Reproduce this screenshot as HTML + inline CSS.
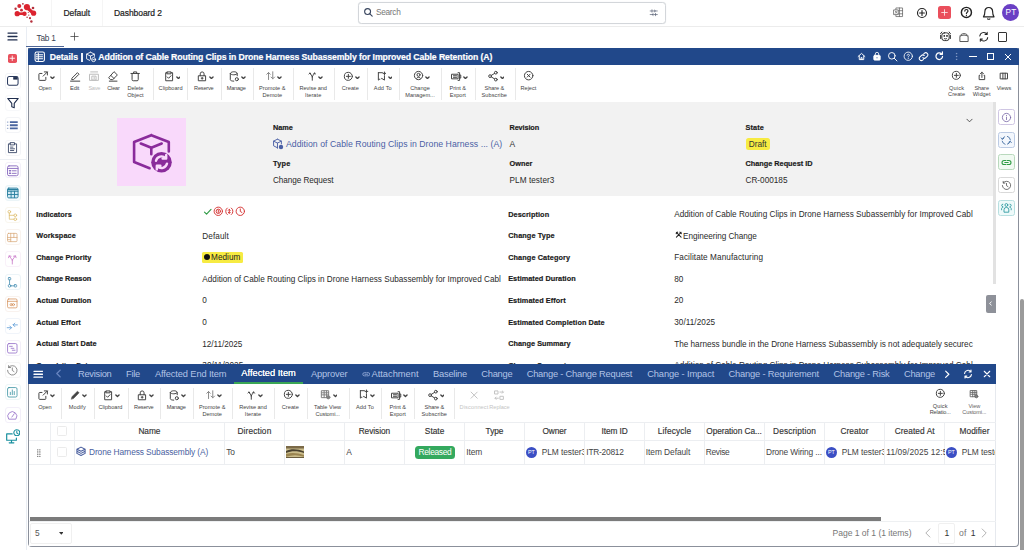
<!DOCTYPE html>
<html><head><meta charset="utf-8"><title>Details</title>
<style>
html,body{margin:0;padding:0;}
body{width:1024px;height:550px;overflow:hidden;background:#fff;position:relative;font-family:"Liberation Sans",sans-serif;}
.b{position:absolute;box-sizing:border-box;display:block;}
.t{position:absolute;white-space:nowrap;display:block;}
</style></head><body>
<div class="b" style="left:0px;top:26px;width:1024px;height:1px;background:#ececec;"></div>
<div class="b" style="left:51px;top:0px;width:1px;height:26px;background:#f5f5f5;"></div>
<div class="b" style="left:102px;top:0px;width:1px;height:26px;background:#f5f5f5;"></div>
<svg class="b" style="left:0px;top:0px" width="48" height="26" viewBox="0 0 48 26" stroke="none"><circle cx="26.9" cy="7.1" r="3.1" fill="#dc2430"/><circle cx="33.6" cy="13.2" r="2.6" fill="#dc2430"/><circle cx="19.3" cy="6.1" r="2.0" fill="#d62a36"/><circle cx="22.9" cy="3.8" r="0.9" fill="#b03540"/><circle cx="15.6" cy="8.7" r="1.2" fill="#b5303c"/><circle cx="21.5" cy="10.2" r="1.4" fill="#c92c38"/><circle cx="33" cy="8" r="1.3" fill="#b5303c"/><circle cx="17.2" cy="13.7" r="2.6" fill="#dc2430"/><circle cx="24.5" cy="13.7" r="2.2" fill="#dc2430"/><circle cx="28.3" cy="12.5" r="0.6" fill="#a83540"/><circle cx="28.8" cy="15.1" r="0.7" fill="#b03540"/><circle cx="27.1" cy="17.3" r="0.8" fill="#b03540"/><circle cx="30" cy="18.2" r="1.1" fill="#b5303c"/><circle cx="31.4" cy="21.5" r="1.2" fill="#b5303c"/><path d="M17.2 13.700L24.500 13.700" stroke="#dc2430" stroke-width="2.600"/><path d="M27.500 8L33 13" stroke="#dc2430" stroke-width="3.200" stroke-linecap="round"/></svg>
<span class="t" style="left:63.45px;top:7px;font-size:8.5px;line-height:12px;color:#222;letter-spacing:-0.062px;-webkit-text-stroke:.2px #222;">Default</span>
<span class="t" style="left:114.00px;top:7px;font-size:8.5px;line-height:12px;color:#222;letter-spacing:-0.061px;-webkit-text-stroke:.2px #222;">Dashboard 2</span>
<div class="b" style="left:358px;top:1.5px;width:308px;height:22px;border:1px solid #d3d6da;border-radius:3.500px;background:#fff;box-shadow:0 0 1px #dfe2e6;"></div>
<svg class="b" style="left:363.05px;top:7.05px;" width="10.5" height="10.5" viewBox="0 0 16 16" fill="none" stroke="#39465f" stroke-width="1.7" stroke-linecap="round" stroke-linejoin="round"><circle cx="7" cy="7" r="4.500"/><path d="M10.500 10.500l3.500 3.500"/></svg>
<span class="t" style="left:376.00px;top:6px;font-size:8.3px;line-height:12px;color:#777;letter-spacing:-0.300px;">Search</span>
<svg class="b" style="left:648.75px;top:7.55px;" width="9.5" height="9.5" viewBox="0 0 16 16" fill="none" stroke="#5a6478" stroke-width="1.2" stroke-linecap="round" stroke-linejoin="round"><path d="M2 5h12M2 11h12M5 3v4M11 9v4M9 3.500l2 1.500-2 1.500M7 9.500l-2 1.500 2 1.500" /></svg>
<svg class="b" style="left:892.05px;top:6.35px;" width="12.5" height="12.5" viewBox="0 0 16 16" fill="none" stroke="#666" stroke-width="1.0" stroke-linecap="round" stroke-linejoin="round"><path d="M5.500 2.500h8v11h-8zM9.500 2.500v11M5.500 6h8M5.500 10h8"/><rect x="2.500" y="5" width="5.500" height="6" fill="#fff"/><path d="M4.200 6.700l2.200 2.600M6.400 6.700l-2.200 2.600" stroke-width=".9"/></svg>
<svg class="b" style="left:915.50px;top:6.50px;" width="12" height="12" viewBox="0 0 16 16" fill="none" stroke="#222" stroke-width="1.5" stroke-linecap="round" stroke-linejoin="round"><circle cx="8" cy="8" r="6"/><path d="M8 4.800v6.400M4.800 8h6.400"/></svg>
<div class="b" style="left:937.8px;top:6px;width:13px;height:13px;background:#ea4f5c;border-radius:2.500px;"></div>
<svg class="b" style="left:939.90px;top:8.00px;" width="9" height="9" viewBox="0 0 16 16" fill="none" stroke="#fdeaec" stroke-width="1.5" stroke-linecap="round" stroke-linejoin="round"><path d="M8 3v10M3 8h10"/></svg>
<svg class="b" style="left:960.00px;top:6.10px;" width="12.8" height="12.8" viewBox="0 0 16 16" fill="none" stroke="#222" stroke-width="1.5" stroke-linecap="round" stroke-linejoin="round"><circle cx="8" cy="8" r="6.300" stroke-width="1.800"/><path d="M6 6.300c0-2.600 4-2.600 4 0 0 1.500-2 1.500-2 3.200M8 11.800v.2"/></svg>
<svg class="b" style="left:980.85px;top:4.85px;" width="15.5" height="15.5" viewBox="0 0 16 16" fill="none" stroke="#222" stroke-width="1.2" stroke-linecap="round" stroke-linejoin="round"><path d="M2.500 12.200h11c-1.300-1.300-1.500-2.200-1.500-5.400 0-5.600-8-5.600-8 0 0 3.200-.2 4.100-1.500 5.400zM6.800 14.300c.6.600 1.800.600 2.400 0"/></svg>
<div class="b" style="left:1002.3px;top:3.8px;width:17.1px;height:17.1px;background:#6a3fc4;border-radius:50%;"></div>
<span class="t" style="left:1005.60px;top:7px;font-size:8.2px;line-height:11px;color:#fff;letter-spacing:0.161px;">PT</span>
<div class="b" style="left:26px;top:27px;width:1px;height:523px;background:#e9edf3;"></div>
<span class="t" style="left:36.50px;top:32px;font-size:8.3px;line-height:12px;color:#3a4253;letter-spacing:-0.261px;">Tab 1</span>
<div class="b" style="left:26px;top:45.9px;width:38px;height:1.6px;background:#4f6697;"></div>
<svg class="b" style="left:69.80px;top:31.80px;" width="9" height="9" viewBox="0 0 16 16" fill="none" stroke="#3a3a3a" stroke-width="1.3" stroke-linecap="round" stroke-linejoin="round"><path d="M8 1.500v13M1.500 8h13"/></svg>
<svg class="b" style="left:7.10px;top:31.30px;" width="11" height="11" viewBox="0 0 16 16" fill="none" stroke="#1f2d4d" stroke-width="1.9" stroke-linecap="round" stroke-linejoin="round"><path d="M1.500 3h13M1.500 8h13M1.500 13h13"/></svg>
<div class="b" style="left:8px;top:53.7px;width:9.3px;height:9.6px;background:#e8505c;border-radius:1.800px;"></div>
<svg class="b" style="left:9.35px;top:55.25px;" width="6.5" height="6.5" viewBox="0 0 16 16" fill="none" stroke="#fff" stroke-width="2.2" stroke-linecap="round" stroke-linejoin="round"><path d="M8 2.500v11M2.500 8h11"/></svg>
<div class="b" style="left:4.5px;top:72.5px;width:16px;height:16px;border:1px solid #f3f4f7;border-radius:3px;background:#fff;"></div>
<svg class="b" style="left:5.80px;top:73.60px;" width="13.6" height="13.6" viewBox="0 0 16 16" fill="none" stroke="#2a3a5e" stroke-width="1.2" stroke-linecap="round" stroke-linejoin="round"><rect x="1.800" y="3" width="12.400" height="10.200" rx="2"/><path d="M8.500 3.600h5.200v3h-5.200z" fill="#1f2d4d" stroke="none"/></svg>
<div class="b" style="left:4.5px;top:94.8px;width:16px;height:16px;border:1px solid #f7f8fa;border-radius:3px;background:#fff;"></div>
<svg class="b" style="left:5.60px;top:95.90px;" width="14" height="14" viewBox="0 0 16 16" fill="none" stroke="#1f2d4d" stroke-width="1.25" stroke-linecap="round" stroke-linejoin="round"><path d="M2 2.800h12l-4.600 5.600v5l-2.800-1v-4z"/></svg>
<div class="b" style="left:4.5px;top:117px;width:16px;height:16px;border:1px solid #f3f4f7;border-radius:3px;background:#fff;"></div>
<svg class="b" style="left:6.35px;top:118.75px;" width="12.5" height="12.5" viewBox="0 0 16 16" fill="none" stroke="#4b66a0" stroke-width="2" stroke-linecap="round" stroke-linejoin="round"><path d="M5 4h10M5 8h10M5 12h10" stroke-width="2.500" stroke-linecap="butt"/><path d="M1.200 4h1.800M1.200 8h1.800M1.200 12h1.800" stroke="#9fb0d0" stroke-width="1.600" stroke-linecap="butt"/></svg>
<div class="b" style="left:4.5px;top:139.5px;width:16px;height:16px;border:1px solid #f3f4f7;border-radius:3px;background:#fff;"></div>
<svg class="b" style="left:6.10px;top:140.80px;" width="13" height="13" viewBox="0 0 16 16" fill="none" stroke="#3a4868" stroke-width="1.1" stroke-linecap="round" stroke-linejoin="round"><path d="M5.500 3.500h-2.500v10.800h10v-10.800h-2.500M5.500 2h5v2.800h-5zM5.500 7.500h3M5.500 9.600h5M5.500 11.700h4"/></svg>
<div class="b" style="left:0px;top:158.5px;width:26px;height:1px;background:#edf0f4;"></div>
<div class="b" style="left:4.5px;top:162.3px;width:16px;height:16px;border:1px solid #f3f0f9;border-radius:3px;background:#fff;"></div>
<svg class="b" style="left:5.80px;top:163.60px;" width="13.6" height="13.6" viewBox="0 0 16 16" fill="none" stroke="#8a6cc0" stroke-width="1.1" stroke-linecap="round" stroke-linejoin="round"><rect x="1.800" y="2.200" width="12.400" height="11.600" rx="1.800"/><path d="M2 5.200h12M7.500 8h4.500M7.500 11h4.500"/><path d="M4.200 8h1.200M4.200 11h1.200" stroke-width="1.800"/></svg>
<div class="b" style="left:4.5px;top:184.8px;width:16px;height:16px;border:1px solid #ebf4f7;border-radius:3px;background:#f6fbfd;"></div>
<svg class="b" style="left:5.80px;top:186.20px;" width="13.6" height="13.6" viewBox="0 0 16 16" fill="none" stroke="#2a7f9f" stroke-width="1.1" stroke-linecap="round" stroke-linejoin="round"><rect x="1.800" y="2.500" width="12.400" height="11.500" rx="1.500" fill="#d3ebf5"/><path d="M2 6.200h12M2 10h12M6 6.200v7.500M10 6.200v7.500"/><path d="M2.300 4.200h11.400" stroke-width="1.600"/></svg>
<div class="b" style="left:4.5px;top:207.3px;width:16px;height:16px;border:1px solid #f9f6ee;border-radius:3px;background:#fff;"></div>
<svg class="b" style="left:6.30px;top:209.00px;" width="12.6" height="12.6" viewBox="0 0 16 16" fill="none" stroke="#dcbb68" stroke-width="0.95" stroke-linecap="round" stroke-linejoin="round"><circle cx="4.200" cy="3.500" r="1.700"/><circle cx="11.800" cy="8" r="1.700"/><circle cx="11.800" cy="13" r="1.700"/><path d="M4.200 5.200v7.800h5.800M4.200 8h5.800"/></svg>
<div class="b" style="left:4.5px;top:229.4px;width:16px;height:16px;border:1px solid #f9f3ee;border-radius:3px;background:#fff;"></div>
<svg class="b" style="left:6.30px;top:231.10px;" width="12.6" height="12.6" viewBox="0 0 16 16" fill="none" stroke="#d9aa7c" stroke-width="0.95" stroke-linecap="round" stroke-linejoin="round"><rect x="2" y="3" width="12" height="10.500" rx="1.200"/><path d="M6 3v10.500M10 3v5.200M2 8.200h12M6 11h-4"/></svg>
<div class="b" style="left:4.5px;top:251.39999999999998px;width:16px;height:16px;border:1px solid #f9f1f9;border-radius:3px;background:#fff;"></div>
<svg class="b" style="left:6.30px;top:253.30px;" width="12.6" height="12.6" viewBox="0 0 16 16" fill="none" stroke="#c46cc4" stroke-width="0.95" stroke-linecap="round" stroke-linejoin="round"><path d="M8 14v-5M8 9l-3.800-5.200M8 9l3.800-5.200M3.200 6l.8-2.500 2.400.6M12.800 6l-.8-2.500-2.400.6"/></svg>
<div class="b" style="left:4.5px;top:274px;width:16px;height:16px;border:1px solid #ecf4f8;border-radius:3px;background:#fff;"></div>
<svg class="b" style="left:6.30px;top:275.70px;" width="12.6" height="12.6" viewBox="0 0 16 16" fill="none" stroke="#3f8ab0" stroke-width="0.95" stroke-linecap="round" stroke-linejoin="round"><rect x="3" y="2" width="3" height="3" rx=".800"/><circle cx="4.500" cy="12.500" r="1.700"/><rect x="10.500" y="11" width="3" height="3" rx=".800"/><path d="M4.500 5v5.800M6.200 12.500h4.300"/></svg>
<div class="b" style="left:4.5px;top:295.5px;width:16px;height:16px;border:1px solid #f9f2ee;border-radius:3px;background:#fff;"></div>
<svg class="b" style="left:6.30px;top:297.30px;" width="12.6" height="12.6" viewBox="0 0 16 16" fill="none" stroke="#d48f58" stroke-width="0.95" stroke-linecap="round" stroke-linejoin="round"><rect x="2" y="2.500" width="12" height="11.300" rx="1.500"/><path d="M2 5.500h12"/><circle cx="6.600" cy="9.700" r="1.400"/><circle cx="9.400" cy="9.700" r="1.400"/></svg>
<div class="b" style="left:4.5px;top:318px;width:16px;height:16px;border:1px solid #f0f4fa;border-radius:3px;background:#fff;"></div>
<svg class="b" style="left:6.30px;top:319.70px;" width="12.6" height="12.6" viewBox="0 0 16 16" fill="none" stroke="#4f93d4" stroke-width="0.95" stroke-linecap="round" stroke-linejoin="round"><path d="M1.500 9.800h5.500l-2.200-2.200M7 9.800l-2.200 2.200M14.500 6.200h-5.500l2.200-2.200M9 6.200l2.200 2.200"/></svg>
<div class="b" style="left:4.5px;top:340px;width:16px;height:16px;border:1px solid #f3eff9;border-radius:3px;background:#fff;"></div>
<svg class="b" style="left:6.30px;top:341.70px;" width="12.6" height="12.6" viewBox="0 0 16 16" fill="none" stroke="#9068c6" stroke-width="1.0" stroke-linecap="round" stroke-linejoin="round"><rect x="2" y="2" width="12" height="12" rx="1.800"/><path d="M4.500 5.500h3.500M6.500 8h3.500M8 10.500h3.500"/></svg>
<div class="b" style="left:4.5px;top:362.4px;width:16px;height:16px;border:1px solid #f5f5f5;border-radius:3px;background:#fff;"></div>
<svg class="b" style="left:6.30px;top:364.10px;" width="12.6" height="12.6" viewBox="0 0 16 16" fill="none" stroke="#6a6a6a" stroke-width="0.95" stroke-linecap="round" stroke-linejoin="round"><path d="M3.300 4.300a6 6 0 1 1-1.300 3.700M3.300 2v2.500h2.500M8 5v3.200l2.200 1.500"/></svg>
<div class="b" style="left:4.5px;top:384.4px;width:16px;height:16px;border:1px solid #ecf6f7;border-radius:3px;background:#fff;"></div>
<svg class="b" style="left:6.30px;top:386.10px;" width="12.6" height="12.6" viewBox="0 0 16 16" fill="none" stroke="#3590a0" stroke-width="1.0" stroke-linecap="round" stroke-linejoin="round"><rect x="2" y="2" width="12" height="12" rx="1.800"/><path d="M5.500 11v-3M8 11v-6M10.500 11v-4"/></svg>
<div class="b" style="left:4.5px;top:406.8px;width:16px;height:16px;border:1px solid #f3eff9;border-radius:3px;background:#fff;"></div>
<svg class="b" style="left:6.30px;top:408.50px;" width="12.6" height="12.6" viewBox="0 0 16 16" fill="none" stroke="#9068c6" stroke-width="1.0" stroke-linecap="round" stroke-linejoin="round"><path d="M3.200 12.500a5.800 5.800 0 1 1 9.600 0zM7.500 10.200l3-4.200"/></svg>
<svg class="b" style="left:5.05px;top:431.05px;" width="13.5" height="13.5" viewBox="0 0 16 16" fill="none" stroke="#19909f" stroke-width="1.4" stroke-linecap="round" stroke-linejoin="round"><path d="M8.500 3.500h-6.500v7.500h11.500v-2.500M5 14h5.500M7.700 11v3"/></svg>
<svg class="b" style="left:12.60px;top:428.50px;" width="7.6" height="7.6" viewBox="0 0 16 16" fill="none" stroke="#19909f" stroke-width="2.2" stroke-linecap="round" stroke-linejoin="round"><circle cx="8" cy="8" r="6.300" fill="#fff"/><path d="M8 4.500v3.800l2.500 1.500"/></svg>
<svg class="b" style="left:938.80px;top:30.30px;" width="13" height="13" viewBox="0 0 16 16" fill="none" stroke="#222" stroke-width="1.15" stroke-linecap="round" stroke-linejoin="round"><rect x="3.500" y="3.500" width="9" height="9.500" rx="3"/><path d="M2 6.500v4M14 6.500v4M2 4.500l1.500-2M14 4.500l-1.500-2M6.500 10.500c.8.800 2.200.800 3 0"/><circle cx="6.300" cy="7.300" r=".5" fill="#222"/><circle cx="9.700" cy="7.300" r=".5" fill="#222"/></svg>
<svg class="b" style="left:958.40px;top:31.30px;" width="12" height="12" viewBox="0 0 16 16" fill="none" stroke="#555" stroke-width="1.3" stroke-linecap="round" stroke-linejoin="round"><path d="M2.500 13.500v-5.500c0-6 11-6 11 0v5.500zM3.500 6.500c2-1.500 7-1.500 9 0"/></svg>
<svg class="b" style="left:977.85px;top:31.05px;" width="11.5" height="11.5" viewBox="0 0 16 16" fill="none" stroke="#222" stroke-width="1.4" stroke-linecap="round" stroke-linejoin="round"><path d="M2.500 7a5.500 5.500 0 0 1 10-2.500M13.500 9a5.500 5.500 0 0 1-10 2.500M12.800 1.800v3h-3M3.200 14.200v-3h3"/></svg>
<div class="b" style="left:997.9px;top:32.4px;width:9.4px;height:9.2px;border:1.100px solid #333;border-radius:1px;"></div>
<div class="b" style="left:28px;top:48px;width:991px;height:499px;border:1px solid #8b909b;border-top:none;border-radius:0 0 4px 4px;background:#fff;"></div>
<div class="b" style="left:28px;top:48px;width:991px;height:17px;background:#21488a;border-radius:2px 2px 0 0;"></div>
<div class="b" style="left:1020px;top:298.5px;width:3.6px;height:252px;background:#9b9b9b;border-radius:2px 2px 0 0;"></div>
<svg class="b" style="left:33.75px;top:51.05px;" width="11.5" height="11.5" viewBox="0 0 16 16" fill="none" stroke="#fff" stroke-width="1.5" stroke-linecap="round" stroke-linejoin="round"><rect x="1.500" y="1.500" width="13" height="13" rx="2.200"/><path d="M7 5.200h5M7 8h5M7 10.800h5M6 3v10"/><path d="M3.800 5.200h.6M3.800 8h.6M3.800 10.800h.6" stroke-width="1.800"/></svg>
<span class="t" style="left:49.70px;top:51px;font-size:8.7px;line-height:12px;color:#fff;font-weight:700;letter-spacing:-0.033px;-webkit-text-stroke:.2px #fff;">Details</span>
<div class="b" style="left:81.3px;top:52.7px;width:1.3px;height:9.8px;background:#eef2fa;"></div>
<svg class="b" style="left:84.55px;top:51.35px;" width="12.5" height="12.5" viewBox="0 0 16 16" fill="none" stroke="#fff" stroke-width="1.1" stroke-linecap="round" stroke-linejoin="round"><path d="M7 1.500l5 2.500v3M7 1.500l-5 2.500v6l4 2M2 4l5 2.500 5-2.500M7 6.500v4"/><circle cx="11" cy="11" r="2.600" fill="none"/><path d="M10 11h2"/></svg>
<span class="t" style="left:98.30px;top:51px;font-size:8.7px;line-height:12px;color:#fff;font-weight:700;letter-spacing:-0.087px;-webkit-text-stroke:.2px #fff;">Addition of Cable Routing Clips in Drone Harness Subassembly for Improved Cable Retention (A)</span>
<svg class="b" style="left:856.50px;top:51.80px;" width="9" height="9" viewBox="0 0 16 16" fill="none" stroke="#fff" stroke-width="1.7" stroke-linecap="round" stroke-linejoin="round"><path d="M2 8l6-5.500 6 5.500M4 7v6.500h8v-6.500M7 13.500v-3.500h2v3.500" /></svg>
<svg class="b" style="left:871.80px;top:51.00px;" width="10" height="10" viewBox="0 0 16 16" fill="none" stroke="#fff" stroke-width="1.6" stroke-linecap="round" stroke-linejoin="round"><rect x="3" y="7" width="10" height="7.500" rx="1" fill="#fff"/><path d="M5.300 7v-2.200a2.700 2.700 0 0 1 5.400 0v2.200" stroke-width="1.300"/><circle cx="8" cy="10.700" r=".9" fill="#21488a" stroke="none"/></svg>
<svg class="b" style="left:886.80px;top:51.00px;" width="11" height="11" viewBox="0 0 16 16" fill="none" stroke="#fff" stroke-width="1.35" stroke-linecap="round" stroke-linejoin="round"><circle cx="7" cy="7" r="4.800"/><path d="M10.500 10.500l4 4"/></svg>
<svg class="b" style="left:902.75px;top:50.55px;" width="10.5" height="10.5" viewBox="0 0 16 16" fill="none" stroke="#fff" stroke-width="1.3" stroke-linecap="round" stroke-linejoin="round"><circle cx="8" cy="8" r="6.300"/><path d="M6.300 6.500c0-2.200 3.400-2.200 3.400 0 0 1.200-1.700 1.300-1.700 2.700M8 11.300v.2"/></svg>
<svg class="b" style="left:918.40px;top:50.90px;" width="11.2" height="11.2" viewBox="0 0 16 16" fill="none" stroke="#fff" stroke-width="1.5" stroke-linecap="round" stroke-linejoin="round"><path d="M7 9.500a3 3 0 0 0 4.200 0l2.300-2.300a3 3 0 0 0-4.200-4.200l-1 1M9 6.500a3 3 0 0 0-4.200 0l-2.300 2.300a3 3 0 0 0 4.200 4.200l1-1"/></svg>
<svg class="b" style="left:933.55px;top:51.15px;" width="10.5" height="10.5" viewBox="0 0 16 16" fill="none" stroke="#fff" stroke-width="1.9" stroke-linecap="round" stroke-linejoin="round"><path d="M13 8a5 5 0 1 1-1.500-3.600M12.800 1.500v3.500h-3.500"/></svg>
<svg class="b" style="left:951.50px;top:51.80px;" width="9" height="9" viewBox="0 0 16 16" fill="none" stroke="#a9bbde" stroke-width="0.6" stroke-linecap="round" stroke-linejoin="round"><circle cx="8" cy="3" r=".7" fill="#a9bbde"/><circle cx="8" cy="8" r=".7" fill="#a9bbde"/><circle cx="8" cy="13" r=".7" fill="#a9bbde"/></svg>
<div class="b" style="left:969.3px;top:55.7px;width:8.2px;height:1.2px;background:#fff;"></div>
<div class="b" style="left:986.7px;top:52.5px;width:7.6px;height:7.4px;border:1.300px solid #fff;"></div>
<svg class="b" style="left:1004.30px;top:52.50px;" width="8" height="8" viewBox="0 0 16 16" fill="none" stroke="#fff" stroke-width="2" stroke-linecap="round" stroke-linejoin="round"><path d="M2.500 2.500l11 11M13.500 2.500l-11 11"/></svg>
<svg class="b" style="left:37.15px;top:69.85px;" width="12.3" height="12.3" viewBox="0 0 16 16" fill="none" stroke="#444" stroke-width="1.3" stroke-linecap="round" stroke-linejoin="round"><path d="M9.5 2.5h4v4M13.5 2.5L8 8M11.5 9.5v3a1 1 0 0 1-1 1h-7a1 1 0 0 1-1-1v-7a1 1 0 0 1 1-1h3"/></svg>
<svg class="b" style="left:49.85px;top:75.55px" width="4.9" height="3.50" viewBox="0 0 7 5" fill="none" stroke="#444" stroke-width="1.9" stroke-linecap="round" stroke-linejoin="round"><path d="M1.200 1.400l2.300 2.300 2.300-2.300"/></svg>
<span class="t" style="left:38.40px;top:84px;font-size:5.6px;line-height:8px;color:#444;letter-spacing:-0.125px;">Open</span>
<div class="b" style="left:60px;top:67.5px;width:1px;height:32.5px;background:#e9e9e9;"></div>
<svg class="b" style="left:68.55px;top:69.85px;" width="12.3" height="12.3" viewBox="0 0 16 16" fill="none" stroke="#444" stroke-width="1.3" stroke-linecap="round" stroke-linejoin="round"><path d="M4 10.5l7-7 2 2-7 7H4zM2 14.5h12"/></svg>
<span class="t" style="left:70.05px;top:84px;font-size:5.6px;line-height:8px;color:#444;letter-spacing:-0.087px;">Edit</span>
<svg class="b" style="left:88.05px;top:69.85px;" width="12.3" height="12.3" viewBox="0 0 16 16" fill="none" stroke="#bdbdbd" stroke-width="1.3" stroke-linecap="round" stroke-linejoin="round"><path d="M2.5 5.5h11v8h-11zM3.500 2.500h9M5.500 8h5v5h-5zM8 9.500v2"/></svg>
<span class="t" style="left:88.40px;top:84px;font-size:5.6px;line-height:8px;color:#bdbdbd;letter-spacing:-0.291px;">Save</span>
<svg class="b" style="left:107.35px;top:69.85px;" width="12.3" height="12.3" viewBox="0 0 16 16" fill="none" stroke="#444" stroke-width="1.3" stroke-linecap="round" stroke-linejoin="round"><path d="M9.500 2.500l4 4-6 6h-3l-2-2zM5 7l4 4M3 14.500h10"/></svg>
<span class="t" style="left:107.20px;top:84px;font-size:5.6px;line-height:8px;color:#444;letter-spacing:-0.157px;">Clear</span>
<svg class="b" style="left:129.25px;top:69.85px;" width="12.3" height="12.3" viewBox="0 0 16 16" fill="none" stroke="#444" stroke-width="1.3" stroke-linecap="round" stroke-linejoin="round"><path d="M2.500 4.500h11M6 4.500v-2h4v2M4 4.500v8a1.500 1.500 0 0 0 1.500 1.500h5a1.500 1.500 0 0 0 1.500-1.500v-8"/></svg>
<span class="t" style="left:127.40px;top:84px;font-size:5.6px;line-height:8px;color:#444;letter-spacing:-0.031px;">Delete</span>
<span class="t" style="left:127.20px;top:91px;font-size:5.6px;line-height:8px;color:#444;letter-spacing:0.036px;">Object</span>
<div class="b" style="left:153px;top:67.5px;width:1px;height:32.5px;background:#e9e9e9;"></div>
<svg class="b" style="left:162.65px;top:69.85px;" width="12.3" height="12.3" viewBox="0 0 16 16" fill="none" stroke="#444" stroke-width="1.3" stroke-linecap="round" stroke-linejoin="round"><path d="M5.500 3.500h-2v10.500h9v-10.500h-2M5.500 2.500h5v2.500h-5zM5.500 9l1.800 1.800 3.200-3.400"/></svg>
<svg class="b" style="left:175.55px;top:75.55px" width="4.9" height="3.50" viewBox="0 0 7 5" fill="none" stroke="#444" stroke-width="1.9" stroke-linecap="round" stroke-linejoin="round"><path d="M1.200 1.400l2.300 2.300 2.300-2.300"/></svg>
<span class="t" style="left:158.60px;top:84px;font-size:5.6px;line-height:8px;color:#444;letter-spacing:0.003px;">Clipboard</span>
<div class="b" style="left:187px;top:67.5px;width:1px;height:32.5px;background:#e9e9e9;"></div>
<svg class="b" style="left:196.15px;top:69.85px;" width="12.3" height="12.3" viewBox="0 0 16 16" fill="none" stroke="#444" stroke-width="1.3" stroke-linecap="round" stroke-linejoin="round"><path d="M3.500 7.500h9v6.500h-9zM5.500 7.500v-2.500a2.500 2.500 0 0 1 5 0v2.500M8 9.500v2.500M6.800 10.700h2.400"/></svg>
<svg class="b" style="left:208.85px;top:75.55px" width="4.9" height="3.50" viewBox="0 0 7 5" fill="none" stroke="#444" stroke-width="1.9" stroke-linecap="round" stroke-linejoin="round"><path d="M1.200 1.400l2.300 2.300 2.300-2.300"/></svg>
<span class="t" style="left:194.05px;top:84px;font-size:5.6px;line-height:8px;color:#444;letter-spacing:-0.193px;">Reserve</span>
<div class="b" style="left:220.5px;top:67.5px;width:1px;height:32.5px;background:#e9e9e9;"></div>
<svg class="b" style="left:228.35px;top:69.85px;" width="12.3" height="12.3" viewBox="0 0 16 16" fill="none" stroke="#444" stroke-width="1.3" stroke-linecap="round" stroke-linejoin="round"><path d="M3 4.500c0-3 9-3 9 0v3M3 4.500v8c0 1.500 2.500 2 4.500 2M3 4.500c0 2.500 9 2.500 9 0"/><circle cx="11.500" cy="12" r="2"/></svg>
<svg class="b" style="left:241.05px;top:75.55px" width="4.9" height="3.50" viewBox="0 0 7 5" fill="none" stroke="#444" stroke-width="1.9" stroke-linecap="round" stroke-linejoin="round"><path d="M1.200 1.400l2.300 2.300 2.300-2.300"/></svg>
<span class="t" style="left:226.70px;top:84px;font-size:5.6px;line-height:8px;color:#444;letter-spacing:-0.206px;">Manage</span>
<div class="b" style="left:253px;top:67.5px;width:1px;height:32.5px;background:#e9e9e9;"></div>
<svg class="b" style="left:264.54px;top:70.34px;" width="11.316" height="11.316" viewBox="0 0 16 16" fill="none" stroke="#8a8a8a" stroke-width="1.4130434782608696" stroke-linecap="round" stroke-linejoin="round"><path d="M5 13.500v-10M2.500 6l2.500-2.500 2.500 2.500M11 2.500v10M8.500 10l2.500 2.500 2.500-2.500"/></svg>
<svg class="b" style="left:277.15px;top:75.55px" width="4.9" height="3.50" viewBox="0 0 7 5" fill="none" stroke="#444" stroke-width="1.9" stroke-linecap="round" stroke-linejoin="round"><path d="M1.200 1.400l2.300 2.300 2.300-2.300"/></svg>
<span class="t" style="left:259.05px;top:84px;font-size:5.6px;line-height:8px;color:#444;letter-spacing:0.005px;">Promote &amp;</span>
<span class="t" style="left:262.55px;top:91px;font-size:5.6px;line-height:8px;color:#444;letter-spacing:-0.018px;">Demote</span>
<div class="b" style="left:292.5px;top:67.5px;width:1px;height:32.5px;background:#e9e9e9;"></div>
<svg class="b" style="left:306.51px;top:70.71px;" width="10.578000000000001" height="10.578000000000001" viewBox="0 0 16 16" fill="none" stroke="#444" stroke-width="1.5116279069767442" stroke-linecap="round" stroke-linejoin="round"><path d="M8 14v-5M8 9c0-3-3.500-3-3.500-6M8 9c0-3 3.500-3 3.500-6M3 4.500l1.500-1.500 1.500 1.500M10 4.500l1.500-1.500 1.500 1.500"/></svg>
<svg class="b" style="left:318.15px;top:75.55px" width="4.9" height="3.50" viewBox="0 0 7 5" fill="none" stroke="#444" stroke-width="1.9" stroke-linecap="round" stroke-linejoin="round"><path d="M1.200 1.400l2.300 2.300 2.300-2.300"/></svg>
<span class="t" style="left:299.45px;top:84px;font-size:5.6px;line-height:8px;color:#444;letter-spacing:-0.052px;">Revise and</span>
<span class="t" style="left:305.05px;top:91px;font-size:5.6px;line-height:8px;color:#444;letter-spacing:0.061px;">Iterate</span>
<div class="b" style="left:334.3px;top:67.5px;width:1px;height:32.5px;background:#e9e9e9;"></div>
<svg class="b" style="left:343.45px;top:70.65px;" width="10.701" height="10.701" viewBox="0 0 16 16" fill="none" stroke="#444" stroke-width="1.4942528735632186" stroke-linecap="round" stroke-linejoin="round"><circle cx="8" cy="8" r="6"/><path d="M8 5v6M5 8h6"/></svg>
<svg class="b" style="left:355.35px;top:75.55px" width="4.9" height="3.50" viewBox="0 0 7 5" fill="none" stroke="#444" stroke-width="1.9" stroke-linecap="round" stroke-linejoin="round"><path d="M1.200 1.400l2.300 2.300 2.300-2.300"/></svg>
<span class="t" style="left:341.80px;top:84px;font-size:5.6px;line-height:8px;color:#444;letter-spacing:0.032px;">Create</span>
<div class="b" style="left:366.5px;top:67.5px;width:1px;height:32.5px;background:#e9e9e9;"></div>
<svg class="b" style="left:375.59px;top:70.59px;" width="10.824" height="10.824" viewBox="0 0 16 16" fill="none" stroke="#444" stroke-width="1.4772727272727275" stroke-linecap="round" stroke-linejoin="round"><path d="M3.500 2.500h6M3.500 2.500v11l2-1.500M12.500 7v6.500l-4-2.500-1 .7M12.500 1.500v4M10.500 3.500h4"/></svg>
<svg class="b" style="left:387.55px;top:75.55px" width="4.9" height="3.50" viewBox="0 0 7 5" fill="none" stroke="#444" stroke-width="1.9" stroke-linecap="round" stroke-linejoin="round"><path d="M1.200 1.400l2.300 2.300 2.300-2.300"/></svg>
<span class="t" style="left:373.80px;top:84px;font-size:5.6px;line-height:8px;color:#444;letter-spacing:0.111px;">Add To</span>
<div class="b" style="left:399.3px;top:67.5px;width:1px;height:32.5px;background:#e9e9e9;"></div>
<svg class="b" style="left:412.76px;top:70.47px;" width="11.07" height="11.07" viewBox="0 0 16 16" fill="none" stroke="#444" stroke-width="1.4444444444444446" stroke-linecap="round" stroke-linejoin="round"><circle cx="8" cy="8" r="6"/><circle cx="8" cy="7" r="2.200"/><path d="M5 12c1-2 5-2 6 0"/></svg>
<svg class="b" style="left:425.05px;top:75.55px" width="4.9" height="3.50" viewBox="0 0 7 5" fill="none" stroke="#444" stroke-width="1.9" stroke-linecap="round" stroke-linejoin="round"><path d="M1.200 1.400l2.300 2.300 2.300-2.300"/></svg>
<span class="t" style="left:410.25px;top:84px;font-size:5.6px;line-height:8px;color:#444;letter-spacing:-0.020px;">Change</span>
<span class="t" style="left:405.25px;top:91px;font-size:5.6px;line-height:8px;color:#444;letter-spacing:-0.007px;">Managem...</span>
<div class="b" style="left:440.5px;top:67.5px;width:1px;height:32.5px;background:#e9e9e9;"></div>
<svg class="b" style="left:450.15px;top:69.85px;" width="12.3" height="12.3" viewBox="0 0 16 16" fill="none" stroke="#444" stroke-width="1.3" stroke-linecap="round" stroke-linejoin="round"><path d="M2.500 5.500h8v6h-8zM4.500 7.500h4M4.500 9.500h4M10.500 3.500h2v10h-2M12.500 6.500h1.500v4h-1.500"/></svg>
<svg class="b" style="left:462.75px;top:75.55px" width="4.9" height="3.50" viewBox="0 0 7 5" fill="none" stroke="#444" stroke-width="1.9" stroke-linecap="round" stroke-linejoin="round"><path d="M1.200 1.400l2.300 2.300 2.300-2.300"/></svg>
<span class="t" style="left:449.55px;top:84px;font-size:5.6px;line-height:8px;color:#444;letter-spacing:-0.044px;">Print &amp;</span>
<span class="t" style="left:449.80px;top:91px;font-size:5.6px;line-height:8px;color:#444;letter-spacing:-0.031px;">Export</span>
<div class="b" style="left:474.5px;top:67.5px;width:1px;height:32.5px;background:#e9e9e9;"></div>
<svg class="b" style="left:486.65px;top:69.85px;" width="12.3" height="12.3" viewBox="0 0 16 16" fill="none" stroke="#444" stroke-width="1.3" stroke-linecap="round" stroke-linejoin="round"><circle cx="11.500" cy="3.500" r="1.800"/><circle cx="4" cy="8" r="1.800"/><circle cx="11.500" cy="12.500" r="1.800"/><path d="M5.600 7l4.300-2.600M5.600 9l4.300 2.600"/></svg>
<svg class="b" style="left:499.55px;top:75.55px" width="4.9" height="3.50" viewBox="0 0 7 5" fill="none" stroke="#444" stroke-width="1.9" stroke-linecap="round" stroke-linejoin="round"><path d="M1.200 1.400l2.300 2.300 2.300-2.300"/></svg>
<span class="t" style="left:484.55px;top:84px;font-size:5.6px;line-height:8px;color:#444;letter-spacing:-0.105px;">Share &amp;</span>
<span class="t" style="left:481.55px;top:91px;font-size:5.6px;line-height:8px;color:#444;letter-spacing:0.066px;">Subscribe</span>
<div class="b" style="left:514.5px;top:67.5px;width:1px;height:32.5px;background:#e9e9e9;"></div>
<svg class="b" style="left:522.74px;top:70.34px;" width="11.316" height="11.316" viewBox="0 0 16 16" fill="none" stroke="#444" stroke-width="1.4130434782608696" stroke-linecap="round" stroke-linejoin="round"><circle cx="8" cy="8" r="6"/><path d="M6 6l4 4M10 6l-4 4"/></svg>
<span class="t" style="left:520.55px;top:84px;font-size:5.6px;line-height:8px;color:#444;letter-spacing:-0.029px;">Reject</span>
<svg class="b" style="left:951.25px;top:70.25px;" width="10.701" height="10.701" viewBox="0 0 16 16" fill="none" stroke="#444" stroke-width="1.4942528735632186" stroke-linecap="round" stroke-linejoin="round"><circle cx="8" cy="8" r="6"/><path d="M8 5v6M5 8h6"/></svg>
<span class="t" style="left:949.10px;top:84px;font-size:5.6px;line-height:8px;color:#444;letter-spacing:0.137px;">Quick</span>
<span class="t" style="left:948.10px;top:90px;font-size:5.6px;line-height:8px;color:#444;letter-spacing:0.032px;">Create</span>
<svg class="b" style="left:976.78px;top:70.68px;" width="9.840000000000002" height="9.840000000000002" viewBox="0 0 16 16" fill="none" stroke="#444" stroke-width="1.625" stroke-linecap="round" stroke-linejoin="round"><path d="M4.500 7h-1v7h9v-7h-1M8 10.500v-8.500M5.500 4.500l2.500-2.500 2.500 2.500"/></svg>
<span class="t" style="left:974.45px;top:84px;font-size:5.6px;line-height:8px;color:#444;letter-spacing:-0.089px;">Share</span>
<span class="t" style="left:972.70px;top:90px;font-size:5.6px;line-height:8px;color:#444;letter-spacing:0.095px;">Widget</span>
<svg class="b" style="left:998.96px;top:70.56px;" width="10.086" height="10.086" viewBox="0 0 16 16" fill="none" stroke="#444" stroke-width="1.5853658536585367" stroke-linecap="round" stroke-linejoin="round"><path d="M2.500 3.500h11v9h-11zM6.200 3.500v9M9.800 3.500v9"/></svg>
<span class="t" style="left:996.75px;top:84px;font-size:5.6px;line-height:8px;color:#444;letter-spacing:-0.067px;">Views</span>
<div class="b" style="left:29px;top:102px;width:967px;height:94px;background:#f2f2f2;"></div>
<div class="b" style="left:117.3px;top:117.7px;width:68.4px;height:68.4px;background:#f9d9fb;"></div>
<svg class="b" style="left:117px;top:117px" width="70" height="70" viewBox="117 117 70 70" fill="none" stroke="#8a2b9b" stroke-width="2.600" stroke-linecap="round" stroke-linejoin="round"><path d="M151.300 135.200l17.500 6.800v9.500M151.300 135.200l-17.200 6.800v20l15.500 6.200M140.800 143.500l10.500 4.200 10.400-4.200M151.300 147.700v6.500"/><circle cx="161.500" cy="162.200" r="10.300" fill="#8a2b9b" stroke="none"/><path d="M156 160.800a5.600 5.600 0 0 1 9.600-2.600M167 163.600a5.600 5.600 0 0 1-9.600 2.600M166.200 155v3.600h-3.600M156.800 169.400v-3.600h3.600" stroke="#f9d9fb" stroke-width="2.400"/></svg>
<span class="t" style="left:273.00px;top:122px;font-size:7.3px;line-height:11px;color:#1a1a1a;font-weight:700;letter-spacing:-0.046px;-webkit-text-stroke:.18px #1a1a1a;">Name</span>
<span class="t" style="left:509.50px;top:122px;font-size:7.3px;line-height:11px;color:#1a1a1a;font-weight:700;letter-spacing:-0.116px;-webkit-text-stroke:.18px #1a1a1a;">Revision</span>
<span class="t" style="left:745.50px;top:122px;font-size:7.3px;line-height:11px;color:#1a1a1a;font-weight:700;letter-spacing:0.130px;-webkit-text-stroke:.18px #1a1a1a;">State</span>
<svg class="b" style="left:272.05px;top:137.75px;" width="12.5" height="12.5" viewBox="0 0 16 16" fill="none" stroke="#4a5fa5" stroke-width="1.2" stroke-linecap="round" stroke-linejoin="round"><path d="M7 1.500l5 2.500v3.500M7 1.500l-5 2.500v6l5 2.500M2 4l5 2.500 5-2.500M7 6.500v6.500"/><circle cx="11.500" cy="11.500" r="2.800" fill="#4a5fa5" stroke="none"/></svg>
<span class="t" style="left:286.00px;top:138px;font-size:8.7px;line-height:12px;color:#4a5fa5;letter-spacing:0.041px;">Addition of Cable Routing Clips in Drone Harness ... (A)</span>
<span class="t" style="left:509.50px;top:138px;font-size:8.5px;line-height:12px;color:#333;">A</span>
<div class="b" style="left:746px;top:138px;width:23.5px;height:11.5px;background:#f7eb42;border-radius:2.500px;"></div>
<span class="t" style="left:748.70px;top:138px;font-size:8.3px;line-height:12px;color:#333;letter-spacing:0.003px;">Draft</span>
<span class="t" style="left:273.00px;top:158px;font-size:7.3px;line-height:11px;color:#1a1a1a;font-weight:700;letter-spacing:0.251px;-webkit-text-stroke:.18px #1a1a1a;">Type</span>
<span class="t" style="left:509.50px;top:158px;font-size:7.3px;line-height:11px;color:#1a1a1a;font-weight:700;letter-spacing:0.057px;-webkit-text-stroke:.18px #1a1a1a;">Owner</span>
<span class="t" style="left:745.50px;top:158px;font-size:7.3px;line-height:11px;color:#1a1a1a;font-weight:700;letter-spacing:0.004px;-webkit-text-stroke:.18px #1a1a1a;">Change Request ID</span>
<span class="t" style="left:273.00px;top:175px;font-size:8.2px;line-height:11px;color:#2a2a2a;letter-spacing:-0.075px;">Change Request</span>
<span class="t" style="left:509.50px;top:175px;font-size:8.2px;line-height:11px;color:#2a2a2a;letter-spacing:0.072px;">PLM tester3</span>
<span class="t" style="left:745.50px;top:175px;font-size:8.2px;line-height:11px;color:#2a2a2a;letter-spacing:0.007px;">CR-000185</span>
<svg class="b" style="left:965.80px;top:116.80px;" width="7" height="7" viewBox="0 0 16 16" fill="none" stroke="#444" stroke-width="2" stroke-linecap="round" stroke-linejoin="round"><path d="M2 5l6 6 6-6"/></svg>
<div class="b" style="left:993.2px;top:102px;width:2.6px;height:182px;background:#e2e2e2;"></div>
<div class="b" style="left:986px;top:294.5px;width:9.5px;height:18.7px;background:#8e9199;border-radius:2px 0 0 2px;"></div>
<svg class="b" style="left:988.10px;top:301.30px;" width="5" height="5" viewBox="0 0 16 16" fill="none" stroke="#fff" stroke-width="3" stroke-linecap="round" stroke-linejoin="round"><path d="M10.500 3l-5.500 5 5.500 5"/></svg>
<div class="b" style="left:998.3px;top:109px;width:16.3px;height:16px;border:1px solid #cfc6e3;border-radius:2.500px;background:#fff;"></div>
<svg class="b" style="left:1001.00px;top:111.50px;" width="11" height="11" viewBox="0 0 16 16" fill="none" stroke="#7a68a8" stroke-width="1.2" stroke-linecap="round" stroke-linejoin="round"><circle cx="8" cy="8" r="6"/><path d="M8 7.500v3.500M8 5v.2"/></svg>
<div class="b" style="left:998.3px;top:131.8px;width:16.3px;height:16px;border:1px solid #bccbe4;border-radius:2.500px;background:#f3f7fd;"></div>
<svg class="b" style="left:1000.25px;top:133.55px;" width="12.5" height="12.5" viewBox="0 0 16 16" fill="none" stroke="#4d75a8" stroke-width="1.2" stroke-linecap="round" stroke-linejoin="round"><path d="M3 6.500a5.200 5.200 0 0 1 3-3M9.500 3a5.200 5.200 0 0 1 3.800 4.500M13 10a5.200 5.200 0 0 1-3.500 3M6.500 13.200a5.200 5.200 0 0 1-3.700-4M1.500 5l1.500 1.800 1.800-1.300M14.500 11l-1.500-1.800-1.800 1.300"/></svg>
<div class="b" style="left:998.3px;top:154.3px;width:16.3px;height:16px;border:1px solid #b9d9bd;border-radius:2.500px;background:#f1faf2;"></div>
<svg class="b" style="left:1001.00px;top:156.80px;" width="11" height="11" viewBox="0 0 16 16" fill="none" stroke="#2f9b45" stroke-width="1.6" stroke-linecap="round" stroke-linejoin="round"><path d="M7 5h-2.500a3 3 0 0 0 0 6h2.500M9 5h2.500a3 3 0 0 1 0 6h-2.500M5.500 8h5"/></svg>
<div class="b" style="left:998.3px;top:177px;width:16.3px;height:16px;border:1px solid #d9d9d9;border-radius:2.500px;background:#fff;"></div>
<svg class="b" style="left:1001.00px;top:179.50px;" width="11" height="11" viewBox="0 0 16 16" fill="none" stroke="#555" stroke-width="1.2" stroke-linecap="round" stroke-linejoin="round"><path d="M3.200 4.200a6 6 0 1 1-1.200 3.800M3.200 2v2.500h2.500M8 5v3.200l2.200 1.500"/></svg>
<div class="b" style="left:998.3px;top:199.8px;width:16.3px;height:16px;border:1px solid #b7dfe0;border-radius:2.500px;background:#eefafa;"></div>
<svg class="b" style="left:1000.10px;top:201.40px;" width="12.8" height="12.8" viewBox="0 0 16 16" fill="none" stroke="#2d9aa0" stroke-width="1.1" stroke-linecap="round" stroke-linejoin="round"><circle cx="8" cy="5" r="1.800"/><path d="M5 13.500v-2.500a3 3 0 0 1 6 0v2.500zM3.500 4a1.500 1.500 0 1 0 0 3M2 11v-1.500c0-1 .5-1.500 1.500-1.500M12.500 4a1.500 1.500 0 1 1 0 3M14 11v-1.500c0-1-.5-1.500-1.500-1.500"/></svg>
<span class="t" style="left:36.30px;top:209px;font-size:7.3px;line-height:11px;color:#1a1a1a;font-weight:700;letter-spacing:0.061px;-webkit-text-stroke:.18px #1a1a1a;">Indicators</span>
<span class="t" style="left:36.30px;top:230px;font-size:7.3px;line-height:11px;color:#1a1a1a;font-weight:700;letter-spacing:0.076px;-webkit-text-stroke:.18px #1a1a1a;">Workspace</span>
<span class="t" style="left:36.30px;top:252px;font-size:7.3px;line-height:11px;color:#1a1a1a;font-weight:700;letter-spacing:0.043px;-webkit-text-stroke:.18px #1a1a1a;">Change Priority</span>
<span class="t" style="left:36.30px;top:273px;font-size:7.3px;line-height:11px;color:#1a1a1a;font-weight:700;letter-spacing:-0.013px;-webkit-text-stroke:.18px #1a1a1a;">Change Reason</span>
<span class="t" style="left:36.30px;top:295px;font-size:7.3px;line-height:11px;color:#1a1a1a;font-weight:700;letter-spacing:0.043px;-webkit-text-stroke:.18px #1a1a1a;">Actual Duration</span>
<span class="t" style="left:36.30px;top:317px;font-size:7.3px;line-height:11px;color:#1a1a1a;font-weight:700;letter-spacing:0.054px;-webkit-text-stroke:.18px #1a1a1a;">Actual Effort</span>
<span class="t" style="left:36.30px;top:338px;font-size:7.3px;line-height:11px;color:#1a1a1a;font-weight:700;letter-spacing:0.099px;-webkit-text-stroke:.18px #1a1a1a;">Actual Start Date</span>
<span class="t" style="left:36.30px;top:360px;font-size:7.3px;line-height:11px;color:#1a1a1a;font-weight:700;letter-spacing:-0.200px;-webkit-text-stroke:.18px #1a1a1a;">Completion Date</span>
<svg class="b" style="left:202.95px;top:206.85px;" width="9.5" height="9.5" viewBox="0 0 16 16" fill="none" stroke="#2f9b45" stroke-width="1.9" stroke-linecap="round" stroke-linejoin="round"><path d="M2.500 8.500l3.500 3.500 7.500-8"/></svg>
<svg class="b" style="left:213.10px;top:205.90px;" width="10.6" height="10.6" viewBox="0 0 16 16" fill="none" stroke="#d63a3a" stroke-width="1.5" stroke-linecap="round" stroke-linejoin="round"><circle cx="8" cy="8" r="6.300"/><circle cx="8" cy="8" r="3.300"/><path d="M8 6.300v3.400"/></svg>
<svg class="b" style="left:223.90px;top:205.90px;" width="10.6" height="10.6" viewBox="0 0 16 16" fill="none" stroke="#d63a3a" stroke-width="1.5" stroke-linecap="round" stroke-linejoin="round"><path d="M5 3a6 6 0 0 0 0 10M11 3a6 6 0 0 1 0 10M8 5v6M6.500 6.500l1.500-1.500 1.500 1.500M6.500 9.500l1.500 1.500 1.500-1.500"/></svg>
<svg class="b" style="left:235.20px;top:205.90px;" width="10.6" height="10.6" viewBox="0 0 16 16" fill="none" stroke="#d63a3a" stroke-width="1.5" stroke-linecap="round" stroke-linejoin="round"><circle cx="8" cy="8" r="6.300"/><path d="M8 4.500v3.800l2.500 1.500"/></svg>
<span class="t" style="left:202.30px;top:231px;font-size:8.2px;line-height:11px;color:#2a2a2a;letter-spacing:0.074px;">Default</span>
<div class="b" style="left:202px;top:251.7px;width:40.5px;height:11px;background:#f7eb42;border-radius:1.500px;"></div>
<div class="b" style="left:203.8px;top:254px;width:6.2px;height:6.2px;background:#111;border-radius:50%;"></div>
<span class="t" style="left:211.00px;top:252px;font-size:8.2px;line-height:11px;color:#222;letter-spacing:0.056px;">Medium</span>
<span class="t" style="left:202.30px;top:274px;font-size:8.2px;line-height:11px;color:#2a2a2a;letter-spacing:0.006px;">Addition of Cable Routing Clips in Drone Harness Subassembly for Improved Cabl</span>
<span class="t" style="left:202.30px;top:295px;font-size:8.2px;line-height:11px;color:#2a2a2a;">0</span>
<span class="t" style="left:202.30px;top:317px;font-size:8.2px;line-height:11px;color:#2a2a2a;">0</span>
<span class="t" style="left:202.30px;top:339px;font-size:8.2px;line-height:11px;color:#2a2a2a;letter-spacing:-0.043px;">12/11/2025</span>
<span class="t" style="left:202.30px;top:360px;font-size:8.2px;line-height:11px;color:#2a2a2a;letter-spacing:0.057px;">30/11/2025</span>
<span class="t" style="left:508.20px;top:209px;font-size:7.3px;line-height:11px;color:#1a1a1a;font-weight:700;letter-spacing:0.077px;-webkit-text-stroke:.18px #1a1a1a;">Description</span>
<span class="t" style="left:508.20px;top:230px;font-size:7.3px;line-height:11px;color:#1a1a1a;font-weight:700;letter-spacing:0.110px;-webkit-text-stroke:.18px #1a1a1a;">Change Type</span>
<span class="t" style="left:508.20px;top:252px;font-size:7.3px;line-height:11px;color:#1a1a1a;font-weight:700;letter-spacing:0.104px;-webkit-text-stroke:.18px #1a1a1a;">Change Category</span>
<span class="t" style="left:508.20px;top:273px;font-size:7.3px;line-height:11px;color:#1a1a1a;font-weight:700;letter-spacing:0.032px;-webkit-text-stroke:.18px #1a1a1a;">Estimated Duration</span>
<span class="t" style="left:508.20px;top:295px;font-size:7.3px;line-height:11px;color:#1a1a1a;font-weight:700;letter-spacing:0.070px;-webkit-text-stroke:.18px #1a1a1a;">Estimated Effort</span>
<span class="t" style="left:508.20px;top:317px;font-size:7.3px;line-height:11px;color:#1a1a1a;font-weight:700;letter-spacing:0.063px;-webkit-text-stroke:.18px #1a1a1a;">Estimated Completion Date</span>
<span class="t" style="left:508.20px;top:338px;font-size:7.3px;line-height:11px;color:#1a1a1a;font-weight:700;letter-spacing:0.031px;-webkit-text-stroke:.18px #1a1a1a;">Change Summary</span>
<span class="t" style="left:508.20px;top:360px;font-size:7.3px;line-height:11px;color:#1a1a1a;font-weight:700;letter-spacing:0.050px;-webkit-text-stroke:.18px #1a1a1a;">Change Synopsis</span>
<span class="t" style="left:674.20px;top:209px;font-size:8.2px;line-height:11px;color:#2a2a2a;letter-spacing:0.006px;">Addition of Cable Routing Clips in Drone Harness Subassembly for Improved Cabl</span>
<svg class="b" style="left:674.75px;top:231.25px;" width="7.5" height="7.5" viewBox="0 0 16 16" fill="none" stroke="#222" stroke-width="2.2" stroke-linecap="round" stroke-linejoin="round"><path d="M3 3l10 10M13 3l-10 10M2.500 5.500l3-3M10.500 2.500l3 3"/></svg>
<span class="t" style="left:683.00px;top:231px;font-size:8.2px;line-height:11px;color:#2a2a2a;letter-spacing:-0.043px;">Engineering Change</span>
<span class="t" style="left:674.20px;top:252px;font-size:8.2px;line-height:11px;color:#2a2a2a;letter-spacing:0.081px;">Facilitate Manufacturing</span>
<span class="t" style="left:674.20px;top:274px;font-size:8.2px;line-height:11px;color:#2a2a2a;">80</span>
<span class="t" style="left:674.20px;top:295px;font-size:8.2px;line-height:11px;color:#2a2a2a;">20</span>
<span class="t" style="left:674.20px;top:317px;font-size:8.2px;line-height:11px;color:#2a2a2a;letter-spacing:0.057px;">30/11/2025</span>
<span class="t" style="left:674.20px;top:339px;font-size:8.2px;line-height:11px;color:#2a2a2a;letter-spacing:-0.000px;">The harness bundle in the Drone Harness Subassembly is not adequately securec</span>
<span class="t" style="left:674.20px;top:360px;font-size:8.2px;line-height:11px;color:#2a2a2a;letter-spacing:0.006px;">Addition of Cable Routing Clips in Drone Harness Subassembly for Improved Cabl</span>
<div class="b" style="left:29px;top:364px;width:967px;height:182px;background:#fff;"></div>
<div class="b" style="left:28.3px;top:364px;width:967.7px;height:19.6px;background:#21488a;"></div>
<div class="b" style="left:995px;top:384px;width:1px;height:162px;background:#e6e9ee;"></div>
<svg class="b" style="left:32.55px;top:369.05px;" width="10.5" height="10.5" viewBox="0 0 16 16" fill="none" stroke="#fff" stroke-width="2" stroke-linecap="round" stroke-linejoin="round"><path d="M1.500 3.500h13M1.500 8h13M1.500 12.500h13"/></svg>
<svg class="b" style="left:53.80px;top:369.10px;" width="9" height="9" viewBox="0 0 16 16" fill="none" stroke="#6885c0" stroke-width="2.4" stroke-linecap="round" stroke-linejoin="round"><path d="M11 2l-6 6 6 6"/></svg>
<span class="t" style="left:78.00px;top:368px;font-size:9.3px;line-height:12px;color:#b2c3e6;letter-spacing:-0.271px;">Revision</span>
<span class="t" style="left:126.00px;top:368px;font-size:9.3px;line-height:12px;color:#b2c3e6;letter-spacing:-0.247px;">File</span>
<span class="t" style="left:155.00px;top:368px;font-size:9.3px;line-height:12px;color:#b2c3e6;letter-spacing:-0.133px;">Affected End Item</span>
<span class="t" style="left:241.30px;top:367px;font-size:9.3px;line-height:12px;color:#fff;letter-spacing:-0.010px;text-shadow:0 0 .4px #fff;">Affected Item</span>
<div class="b" style="left:233.5px;top:381.9px;width:69.5px;height:1.7px;background:#3aa655;"></div>
<span class="t" style="left:311.00px;top:368px;font-size:9.3px;line-height:12px;color:#b2c3e6;letter-spacing:-0.155px;">Approver</span>
<svg class="b" style="left:361.75px;top:369.75px;" width="8.5" height="8.5" viewBox="0 0 16 16" fill="none" stroke="#9db2de" stroke-width="1.5" stroke-linecap="round" stroke-linejoin="round"><path d="M7 5h-2.500a3 3 0 0 0 0 6h2.500M9 5h2.500a3 3 0 0 1 0 6h-2.500M5.500 8h5"/></svg>
<span class="t" style="left:371.50px;top:368px;font-size:9.3px;line-height:12px;color:#b2c3e6;letter-spacing:-0.004px;">Attachment</span>
<span class="t" style="left:433.00px;top:368px;font-size:9.3px;line-height:12px;color:#b2c3e6;letter-spacing:-0.209px;">Baseline</span>
<span class="t" style="left:481.30px;top:368px;font-size:9.3px;line-height:12px;color:#b2c3e6;letter-spacing:-0.263px;">Change</span>
<span class="t" style="left:526.70px;top:368px;font-size:9.3px;line-height:12px;color:#b2c3e6;letter-spacing:-0.224px;">Change - Change Request</span>
<span class="t" style="left:647.20px;top:368px;font-size:9.3px;line-height:12px;color:#b2c3e6;letter-spacing:-0.117px;">Change - Impact</span>
<span class="t" style="left:728.50px;top:368px;font-size:9.3px;line-height:12px;color:#b2c3e6;letter-spacing:-0.179px;">Change - Requirement</span>
<span class="t" style="left:833.50px;top:368px;font-size:9.3px;line-height:12px;color:#b2c3e6;letter-spacing:-0.225px;">Change - Risk</span>
<span class="t" style="left:904.00px;top:368px;font-size:9.3px;line-height:12px;color:#b2c3e6;letter-spacing:-0.263px;">Change</span>
<svg class="b" style="left:943.45px;top:369.75px;" width="8.5" height="8.5" viewBox="0 0 16 16" fill="none" stroke="#fff" stroke-width="2.2" stroke-linecap="round" stroke-linejoin="round"><path d="M5 2l6 6-6 6"/></svg>
<svg class="b" style="left:963.30px;top:369.00px;" width="10" height="10" viewBox="0 0 16 16" fill="none" stroke="#fff" stroke-width="1.8" stroke-linecap="round" stroke-linejoin="round"><path d="M2.500 7a5.500 5.500 0 0 1 10-2.500M13.500 9a5.500 5.500 0 0 1-10 2.500M12.800 1.800v3h-3M3.200 14.200v-3h3"/></svg>
<svg class="b" style="left:982.70px;top:370.00px;" width="8" height="8" viewBox="0 0 16 16" fill="none" stroke="#fff" stroke-width="2.2" stroke-linecap="round" stroke-linejoin="round"><path d="M2.500 2.500l11 11M13.500 2.500l-11 11"/></svg>
<svg class="b" style="left:37.15px;top:388.65px;" width="12.3" height="12.3" viewBox="0 0 16 16" fill="none" stroke="#444" stroke-width="1.3" stroke-linecap="round" stroke-linejoin="round"><path d="M9.5 2.5h4v4M13.5 2.5L8 8M11.5 9.5v3a1 1 0 0 1-1 1h-7a1 1 0 0 1-1-1v-7a1 1 0 0 1 1-1h3"/></svg>
<svg class="b" style="left:49.85px;top:394.35px" width="4.9" height="3.50" viewBox="0 0 7 5" fill="none" stroke="#444" stroke-width="1.9" stroke-linecap="round" stroke-linejoin="round"><path d="M1.200 1.400l2.300 2.300 2.300-2.300"/></svg>
<span class="t" style="left:38.20px;top:403px;font-size:5.6px;line-height:8px;color:#444;letter-spacing:-0.125px;">Open</span>
<div class="b" style="left:60.5px;top:388px;width:1px;height:31px;background:#e9e9e9;"></div>
<svg class="b" style="left:69.35px;top:388.65px;" width="12.3" height="12.3" viewBox="0 0 16 16" fill="none" stroke="#444" stroke-width="1.3" stroke-linecap="round" stroke-linejoin="round"><path d="M3 13l.8-3 7.2-7.2 2.200 2.200-7.2 7.2z" fill="#444" stroke-width=".6"/></svg>
<svg class="b" style="left:82.05px;top:394.35px" width="4.9" height="3.50" viewBox="0 0 7 5" fill="none" stroke="#444" stroke-width="1.9" stroke-linecap="round" stroke-linejoin="round"><path d="M1.200 1.400l2.300 2.300 2.300-2.300"/></svg>
<span class="t" style="left:68.80px;top:403px;font-size:5.6px;line-height:8px;color:#444;letter-spacing:0.084px;">Modify</span>
<div class="b" style="left:94px;top:388px;width:1px;height:31px;background:#e9e9e9;"></div>
<svg class="b" style="left:102.45px;top:388.65px;" width="12.3" height="12.3" viewBox="0 0 16 16" fill="none" stroke="#444" stroke-width="1.3" stroke-linecap="round" stroke-linejoin="round"><path d="M5.500 3.500h-2v10.500h9v-10.500h-2M5.500 2.500h5v2.500h-5zM5.500 9l1.800 1.800 3.200-3.400"/></svg>
<svg class="b" style="left:115.35px;top:394.35px" width="4.9" height="3.50" viewBox="0 0 7 5" fill="none" stroke="#444" stroke-width="1.9" stroke-linecap="round" stroke-linejoin="round"><path d="M1.200 1.400l2.300 2.300 2.300-2.300"/></svg>
<span class="t" style="left:98.40px;top:403px;font-size:5.6px;line-height:8px;color:#444;letter-spacing:0.003px;">Clipboard</span>
<div class="b" style="left:127.5px;top:388px;width:1px;height:31px;background:#e9e9e9;"></div>
<svg class="b" style="left:136.15px;top:388.65px;" width="12.3" height="12.3" viewBox="0 0 16 16" fill="none" stroke="#444" stroke-width="1.3" stroke-linecap="round" stroke-linejoin="round"><path d="M3.500 7.500h9v6.500h-9zM5.500 7.500v-2.500a2.500 2.500 0 0 1 5 0v2.500M8 9.500v2.500M6.800 10.700h2.400"/></svg>
<svg class="b" style="left:148.85px;top:394.35px" width="4.9" height="3.50" viewBox="0 0 7 5" fill="none" stroke="#444" stroke-width="1.9" stroke-linecap="round" stroke-linejoin="round"><path d="M1.200 1.400l2.300 2.300 2.300-2.300"/></svg>
<span class="t" style="left:134.05px;top:403px;font-size:5.6px;line-height:8px;color:#444;letter-spacing:-0.193px;">Reserve</span>
<div class="b" style="left:160.3px;top:388px;width:1px;height:31px;background:#e9e9e9;"></div>
<svg class="b" style="left:168.35px;top:388.65px;" width="12.3" height="12.3" viewBox="0 0 16 16" fill="none" stroke="#444" stroke-width="1.3" stroke-linecap="round" stroke-linejoin="round"><path d="M3 4.500c0-3 9-3 9 0v3M3 4.500v8c0 1.500 2.500 2 4.500 2M3 4.500c0 2.500 9 2.500 9 0"/><circle cx="11.500" cy="12" r="2"/></svg>
<svg class="b" style="left:181.05px;top:394.35px" width="4.9" height="3.50" viewBox="0 0 7 5" fill="none" stroke="#444" stroke-width="1.9" stroke-linecap="round" stroke-linejoin="round"><path d="M1.200 1.400l2.300 2.300 2.300-2.300"/></svg>
<span class="t" style="left:166.70px;top:403px;font-size:5.6px;line-height:8px;color:#444;letter-spacing:-0.206px;">Manage</span>
<div class="b" style="left:192.5px;top:388px;width:1px;height:31px;background:#e9e9e9;"></div>
<svg class="b" style="left:204.54px;top:389.14px;" width="11.316" height="11.316" viewBox="0 0 16 16" fill="none" stroke="#8a8a8a" stroke-width="1.4130434782608696" stroke-linecap="round" stroke-linejoin="round"><path d="M5 13.500v-10M2.500 6l2.500-2.500 2.500 2.500M11 2.500v10M8.500 10l2.500 2.500 2.500-2.500"/></svg>
<svg class="b" style="left:217.15px;top:394.35px" width="4.9" height="3.50" viewBox="0 0 7 5" fill="none" stroke="#444" stroke-width="1.9" stroke-linecap="round" stroke-linejoin="round"><path d="M1.200 1.400l2.300 2.300 2.300-2.300"/></svg>
<span class="t" style="left:198.95px;top:403px;font-size:5.6px;line-height:8px;color:#444;letter-spacing:0.005px;">Promote &amp;</span>
<span class="t" style="left:202.45px;top:410px;font-size:5.6px;line-height:8px;color:#444;letter-spacing:-0.018px;">Demote</span>
<div class="b" style="left:232.3px;top:388px;width:1px;height:31px;background:#e9e9e9;"></div>
<svg class="b" style="left:246.31px;top:389.51px;" width="10.578000000000001" height="10.578000000000001" viewBox="0 0 16 16" fill="none" stroke="#444" stroke-width="1.5116279069767442" stroke-linecap="round" stroke-linejoin="round"><path d="M8 14v-5M8 9c0-3-3.500-3-3.500-6M8 9c0-3 3.500-3 3.500-6M3 4.500l1.500-1.500 1.500 1.500M10 4.500l1.500-1.500 1.500 1.500"/></svg>
<svg class="b" style="left:258.05px;top:394.35px" width="4.9" height="3.50" viewBox="0 0 7 5" fill="none" stroke="#444" stroke-width="1.9" stroke-linecap="round" stroke-linejoin="round"><path d="M1.200 1.400l2.300 2.300 2.300-2.300"/></svg>
<span class="t" style="left:239.25px;top:403px;font-size:5.6px;line-height:8px;color:#444;letter-spacing:-0.052px;">Revise and</span>
<span class="t" style="left:244.85px;top:410px;font-size:5.6px;line-height:8px;color:#444;letter-spacing:0.061px;">Iterate</span>
<div class="b" style="left:274px;top:388px;width:1px;height:31px;background:#e9e9e9;"></div>
<svg class="b" style="left:283.45px;top:389.45px;" width="10.701" height="10.701" viewBox="0 0 16 16" fill="none" stroke="#444" stroke-width="1.4942528735632186" stroke-linecap="round" stroke-linejoin="round"><circle cx="8" cy="8" r="6"/><path d="M8 5v6M5 8h6"/></svg>
<svg class="b" style="left:295.35px;top:394.35px" width="4.9" height="3.50" viewBox="0 0 7 5" fill="none" stroke="#444" stroke-width="1.9" stroke-linecap="round" stroke-linejoin="round"><path d="M1.200 1.400l2.300 2.300 2.300-2.300"/></svg>
<span class="t" style="left:281.80px;top:403px;font-size:5.6px;line-height:8px;color:#444;letter-spacing:0.032px;">Create</span>
<div class="b" style="left:306.8px;top:388px;width:1px;height:31px;background:#e9e9e9;"></div>
<svg class="b" style="left:320.46px;top:389.26px;" width="11.07" height="11.07" viewBox="0 0 16 16" fill="none" stroke="#808080" stroke-width="1.4444444444444446" stroke-linecap="round" stroke-linejoin="round"><path d="M2.500 2.500h10v10h-10zM2.500 5.500h10M2.500 8.500h10M6 2.500v10M9.500 2.500v10"/><circle cx="12" cy="12" r="2.300" fill="#808080"/></svg>
<svg class="b" style="left:332.55px;top:394.35px" width="4.9" height="3.50" viewBox="0 0 7 5" fill="none" stroke="#444" stroke-width="1.9" stroke-linecap="round" stroke-linejoin="round"><path d="M1.200 1.400l2.300 2.300 2.300-2.300"/></svg>
<span class="t" style="left:314.10px;top:403px;font-size:5.6px;line-height:8px;color:#444;letter-spacing:0.002px;">Table View</span>
<span class="t" style="left:315.60px;top:410px;font-size:5.6px;line-height:8px;color:#444;letter-spacing:-0.121px;">Customi...</span>
<div class="b" style="left:349px;top:388px;width:1px;height:31px;background:#e9e9e9;"></div>
<svg class="b" style="left:357.89px;top:389.39px;" width="10.824" height="10.824" viewBox="0 0 16 16" fill="none" stroke="#444" stroke-width="1.4772727272727275" stroke-linecap="round" stroke-linejoin="round"><path d="M3.500 2.500h6M3.500 2.500v11l2-1.500M12.500 7v6.500l-4-2.500-1 .7M12.500 1.500v4M10.500 3.500h4"/></svg>
<svg class="b" style="left:369.85px;top:394.35px" width="4.9" height="3.50" viewBox="0 0 7 5" fill="none" stroke="#444" stroke-width="1.9" stroke-linecap="round" stroke-linejoin="round"><path d="M1.200 1.400l2.300 2.300 2.300-2.300"/></svg>
<span class="t" style="left:356.00px;top:403px;font-size:5.6px;line-height:8px;color:#444;letter-spacing:0.111px;">Add To</span>
<div class="b" style="left:381.3px;top:388px;width:1px;height:31px;background:#e9e9e9;"></div>
<svg class="b" style="left:390.15px;top:388.65px;" width="12.3" height="12.3" viewBox="0 0 16 16" fill="none" stroke="#444" stroke-width="1.3" stroke-linecap="round" stroke-linejoin="round"><path d="M2.500 5.500h8v6h-8zM4.500 7.500h4M4.500 9.500h4M10.500 3.500h2v10h-2M12.500 6.500h1.500v4h-1.500"/></svg>
<svg class="b" style="left:402.85px;top:394.35px" width="4.9" height="3.50" viewBox="0 0 7 5" fill="none" stroke="#444" stroke-width="1.9" stroke-linecap="round" stroke-linejoin="round"><path d="M1.200 1.400l2.300 2.300 2.300-2.300"/></svg>
<span class="t" style="left:389.55px;top:403px;font-size:5.6px;line-height:8px;color:#444;letter-spacing:-0.044px;">Print &amp;</span>
<span class="t" style="left:389.80px;top:410px;font-size:5.6px;line-height:8px;color:#444;letter-spacing:-0.031px;">Export</span>
<div class="b" style="left:414.3px;top:388px;width:1px;height:31px;background:#e9e9e9;"></div>
<svg class="b" style="left:426.65px;top:388.65px;" width="12.3" height="12.3" viewBox="0 0 16 16" fill="none" stroke="#444" stroke-width="1.3" stroke-linecap="round" stroke-linejoin="round"><circle cx="11.500" cy="3.500" r="1.800"/><circle cx="4" cy="8" r="1.800"/><circle cx="11.500" cy="12.500" r="1.800"/><path d="M5.600 7l4.300-2.600M5.600 9l4.300 2.600"/></svg>
<svg class="b" style="left:439.55px;top:394.35px" width="4.9" height="3.50" viewBox="0 0 7 5" fill="none" stroke="#444" stroke-width="1.9" stroke-linecap="round" stroke-linejoin="round"><path d="M1.200 1.400l2.300 2.300 2.300-2.300"/></svg>
<span class="t" style="left:424.55px;top:403px;font-size:5.6px;line-height:8px;color:#444;letter-spacing:-0.105px;">Share &amp;</span>
<span class="t" style="left:421.55px;top:410px;font-size:5.6px;line-height:8px;color:#444;letter-spacing:0.066px;">Subscribe</span>
<div class="b" style="left:454.4px;top:388px;width:1px;height:31px;background:#e9e9e9;"></div>
<svg class="b" style="left:467.85px;top:388.65px;" width="12.3" height="12.3" viewBox="0 0 16 16" fill="none" stroke="#c4c4c4" stroke-width="1.3" stroke-linecap="round" stroke-linejoin="round"><path d="M4 4l8 8M12 4l-8 8"/></svg>
<span class="t" style="left:459.50px;top:403px;font-size:5.6px;line-height:8px;color:#c4c4c4;letter-spacing:0.130px;">Disconnect</span>
<svg class="b" style="left:493.35px;top:388.65px;" width="12.3" height="12.3" viewBox="0 0 16 16" fill="none" stroke="#c4c4c4" stroke-width="1.3" stroke-linecap="round" stroke-linejoin="round"><path d="M2.500 2.500h4v4h-4zM9.500 9.500h4v4h-4zM9 4h4.500l-1.500-1.500M13.500 4l-1.500 1.500M7 12H2.500l1.500-1.500M2.500 12l1.500 1.500"/></svg>
<span class="t" style="left:489.25px;top:403px;font-size:5.6px;line-height:8px;color:#c4c4c4;letter-spacing:-0.007px;">Replace</span>
<svg class="b" style="left:934.85px;top:388.35px;" width="10.701" height="10.701" viewBox="0 0 16 16" fill="none" stroke="#444" stroke-width="1.4942528735632186" stroke-linecap="round" stroke-linejoin="round"><circle cx="8" cy="8" r="6"/><path d="M8 5v6M5 8h6"/></svg>
<span class="t" style="left:932.70px;top:402px;font-size:5.6px;line-height:8px;color:#444;letter-spacing:0.137px;">Quick</span>
<span class="t" style="left:929.70px;top:408px;font-size:5.6px;line-height:8px;color:#444;letter-spacing:-0.110px;">Relatio...</span>
<svg class="b" style="left:969.35px;top:389.25px;" width="9.9" height="9.9" viewBox="0 0 16 16" fill="none" stroke="#666" stroke-width="1.4444444444444444" stroke-linecap="round" stroke-linejoin="round"><path d="M2.500 2.500h10v10h-10zM2.500 5.500h10M2.500 8.500h10M6 2.500v10M9.500 2.500v10"/><circle cx="12" cy="12" r="2.300" fill="#808080"/></svg>
<span class="t" style="left:968.55px;top:402px;font-size:5.6px;line-height:8px;color:#666;letter-spacing:-0.134px;">View</span>
<span class="t" style="left:962.30px;top:408px;font-size:5.6px;line-height:8px;color:#666;letter-spacing:-0.121px;">Customi...</span>
<div class="b" style="left:29px;top:421.5px;width:967px;height:1px;background:#eceef1;"></div>
<div class="b" style="left:29px;top:440.3px;width:967px;height:1px;background:#eceef1;"></div>
<div class="b" style="left:29px;top:463.5px;width:967px;height:1px;background:#eceef1;"></div>
<div class="b" style="left:50px;top:422px;width:1px;height:41.5px;background:#eceef1;"></div>
<div class="b" style="left:74px;top:422px;width:1px;height:41.5px;background:#eceef1;"></div>
<div class="b" style="left:224.3px;top:422px;width:1px;height:41.5px;background:#eceef1;"></div>
<div class="b" style="left:284.3px;top:422px;width:1px;height:41.5px;background:#eceef1;"></div>
<div class="b" style="left:344.3px;top:422px;width:1px;height:41.5px;background:#eceef1;"></div>
<div class="b" style="left:404.3px;top:422px;width:1px;height:41.5px;background:#eceef1;"></div>
<div class="b" style="left:464.3px;top:422px;width:1px;height:41.5px;background:#eceef1;"></div>
<div class="b" style="left:524.3px;top:422px;width:1px;height:41.5px;background:#eceef1;"></div>
<div class="b" style="left:584.3px;top:422px;width:1px;height:41.5px;background:#eceef1;"></div>
<div class="b" style="left:644.3px;top:422px;width:1px;height:41.5px;background:#eceef1;"></div>
<div class="b" style="left:704.3px;top:422px;width:1px;height:41.5px;background:#eceef1;"></div>
<div class="b" style="left:764.3px;top:422px;width:1px;height:41.5px;background:#eceef1;"></div>
<div class="b" style="left:824.3px;top:422px;width:1px;height:41.5px;background:#eceef1;"></div>
<div class="b" style="left:884.3px;top:422px;width:1px;height:41.5px;background:#eceef1;"></div>
<div class="b" style="left:944.3px;top:422px;width:1px;height:41.5px;background:#eceef1;"></div>
<span class="t" style="left:138.40px;top:425px;font-size:8.3px;line-height:12px;color:#333;letter-spacing:-0.035px;-webkit-text-stroke:.15px #333;">Name</span>
<span class="t" style="left:237.40px;top:425px;font-size:8.3px;line-height:12px;color:#333;letter-spacing:0.139px;-webkit-text-stroke:.15px #333;">Direction</span>
<span class="t" style="left:358.65px;top:425px;font-size:8.3px;line-height:12px;color:#333;letter-spacing:-0.041px;-webkit-text-stroke:.15px #333;">Revision</span>
<span class="t" style="left:424.85px;top:425px;font-size:8.3px;line-height:12px;color:#333;letter-spacing:0.024px;-webkit-text-stroke:.15px #333;">State</span>
<span class="t" style="left:485.60px;top:425px;font-size:8.3px;line-height:12px;color:#333;letter-spacing:-0.049px;-webkit-text-stroke:.15px #333;">Type</span>
<span class="t" style="left:542.40px;top:425px;font-size:8.3px;line-height:12px;color:#333;letter-spacing:-0.089px;-webkit-text-stroke:.15px #333;">Owner</span>
<span class="t" style="left:601.60px;top:425px;font-size:8.3px;line-height:12px;color:#333;letter-spacing:-0.107px;-webkit-text-stroke:.15px #333;">Item ID</span>
<span class="t" style="left:657.85px;top:425px;font-size:8.3px;line-height:12px;color:#333;letter-spacing:0.134px;-webkit-text-stroke:.15px #333;">Lifecycle</span>
<span class="t" style="left:706.25px;top:425px;font-size:8.3px;line-height:12px;color:#333;letter-spacing:-0.052px;-webkit-text-stroke:.15px #333;">Operation Ca...</span>
<span class="t" style="left:773.00px;top:425px;font-size:8.3px;line-height:12px;color:#333;letter-spacing:0.135px;-webkit-text-stroke:.15px #333;">Description</span>
<span class="t" style="left:840.50px;top:425px;font-size:8.3px;line-height:12px;color:#333;letter-spacing:0.046px;-webkit-text-stroke:.15px #333;">Creator</span>
<span class="t" style="left:894.70px;top:425px;font-size:8.3px;line-height:12px;color:#333;letter-spacing:0.078px;-webkit-text-stroke:.15px #333;">Created At</span>
<span class="t" style="left:959.50px;top:425px;font-size:8.3px;line-height:12px;color:#333;letter-spacing:0.060px;-webkit-text-stroke:.15px #333;">Modifier</span>
<div class="b" style="left:57px;top:425.7px;width:10px;height:10px;border:1px solid #ebebeb;border-radius:1.500px;"></div>
<div class="b" style="left:57px;top:447px;width:10px;height:10px;border:1px solid #ebebeb;border-radius:1.500px;"></div>
<svg class="b" style="left:37.400px;top:448.700px" width="3.700" height="8.200" viewBox="0 0 4.600 10.200" fill="#444"><circle cx="1" cy="1" r=".75"/><circle cx="1" cy="3.7" r=".75"/><circle cx="1" cy="6.4" r=".75"/><circle cx="1" cy="9.1" r=".75"/><circle cx="3.6" cy="1" r=".75"/><circle cx="3.6" cy="3.7" r=".75"/><circle cx="3.6" cy="6.4" r=".75"/><circle cx="3.6" cy="9.1" r=".75"/></svg>
<svg class="b" style="left:75.20px;top:446.30px;" width="12" height="12" viewBox="0 0 16 16" fill="none" stroke="#4a5f9f" stroke-width="1.4" stroke-linecap="round" stroke-linejoin="round"><path d="M8 1.500l5.500 2.800-5.500 2.800-5.500-2.800zM2.500 7l5.500 2.800 5.500-2.800M2.500 9.800l5.500 2.800 5.500-2.800M2.500 4.300v5.500M13.500 4.300v5.500"/></svg>
<span class="t" style="left:89.00px;top:446px;font-size:8.4px;line-height:12px;color:#4a5f9f;letter-spacing:-0.113px;">Drone Harness Subassembly (A)</span>
<span class="t" style="left:226.30px;top:446px;font-size:8.4px;line-height:12px;color:#444;letter-spacing:-0.186px;">To</span>
<svg class="b" style="left:286px;top:446.3px" width="18" height="12" viewBox="0 0 18 12"><rect width="18" height="12" fill="#cbbd8c"/><rect y="0" width="18" height="2.500" fill="#7b6a48"/><path d="M0 5c5-2.500 12-2 18 .5v1.500c-6-2-12-2.500-18 0z" fill="#4a4230"/><path d="M0 8c6-2 12-1 18 1v1.800c-6-2-12-2-18 0z" fill="#9a8450"/><rect y="11" width="18" height="1" fill="#6a5c3e"/></svg>
<span class="t" style="left:346.30px;top:446px;font-size:8.4px;line-height:12px;color:#444;">A</span>
<div class="b" style="left:415px;top:445.9px;width:39.5px;height:13px;background:#34a95e;border-radius:3.500px;"></div>
<span class="t" style="left:418.50px;top:446px;font-size:8.4px;line-height:12px;color:#fff;letter-spacing:-0.311px;">Released</span>
<span class="t" style="left:466.30px;top:446px;font-size:8.4px;line-height:12px;color:#444;letter-spacing:-0.084px;">Item</span>
<div class="b" style="left:525.8px;top:446.7px;width:11px;height:11px;background:#3b4fc4;border-radius:50%;"></div>
<span class="t" style="left:528.00px;top:448px;font-size:5.4px;line-height:8px;color:#fff;letter-spacing:-0.150px;">PT</span>
<div class="b" style="left:541px;top:445px;width:42.800px;height:16px;overflow:hidden;">
<span class="t" style="left:0.70px;top:1px;font-size:8.4px;line-height:12px;color:#444;letter-spacing:-0.072px;">PLM tester3</span>
</div>
<span class="t" style="left:586.30px;top:446px;font-size:8.4px;line-height:12px;color:#444;letter-spacing:-0.243px;">ITR-20812</span>
<span class="t" style="left:645.80px;top:446px;font-size:8.4px;line-height:12px;color:#444;letter-spacing:-0.065px;">Item Default</span>
<span class="t" style="left:705.80px;top:446px;font-size:8.4px;line-height:12px;color:#444;letter-spacing:-0.329px;">Revise</span>
<span class="t" style="left:766.00px;top:446px;font-size:8.4px;line-height:12px;color:#444;letter-spacing:-0.147px;">Drone Wiring ...</span>
<div class="b" style="left:825.8px;top:446.7px;width:11px;height:11px;background:#3b4fc4;border-radius:50%;"></div>
<span class="t" style="left:828.00px;top:448px;font-size:5.4px;line-height:8px;color:#fff;letter-spacing:-0.150px;">PT</span>
<div class="b" style="left:841px;top:445px;width:42.800px;height:16px;overflow:hidden;">
<span class="t" style="left:0.70px;top:1px;font-size:8.4px;line-height:12px;color:#444;letter-spacing:-0.072px;">PLM tester3</span>
</div>
<div class="b" style="left:885.500px;top:445px;width:59px;height:16px;overflow:hidden;">
<span class="t" style="left:0.80px;top:1px;font-size:8.4px;line-height:12px;color:#444;letter-spacing:0.077px;">11/09/2025 12:55</span>
</div>
<div class="b" style="left:945.8px;top:446.7px;width:11px;height:11px;background:#3b4fc4;border-radius:50%;"></div>
<span class="t" style="left:948.00px;top:448px;font-size:5.4px;line-height:8px;color:#fff;letter-spacing:-0.150px;">PT</span>
<div class="b" style="left:961px;top:445px;width:34px;height:16px;overflow:hidden;">
<span class="t" style="left:0.70px;top:1px;font-size:8.4px;line-height:12px;color:#444;letter-spacing:-0.072px;">PLM tester3</span>
</div>
<div class="b" style="left:30.3px;top:517.2px;width:850.5px;height:3.7px;background:#7b7b7b;"></div>
<div class="b" style="left:29px;top:521.3px;width:967px;height:1px;background:#eef0f2;"></div>
<div class="b" style="left:30px;top:523px;width:41.5px;height:20.5px;border:1px solid #f0f0f0;border-radius:2px;"></div>
<span class="t" style="left:35.00px;top:527px;font-size:8.3px;line-height:12px;color:#555;">5</span>
<svg class="b" style="left:58.800px;top:531.800px" width="4.600" height="2.800" viewBox="0 0 4.600 2.800"><path d="M0 0h4.600l-2.300 2.800z" fill="#333"/></svg>
<span class="t" style="left:832.50px;top:527px;font-size:8.6px;line-height:12px;color:#777;letter-spacing:-0.039px;">Page 1 of 1 (1 items)</span>
<svg class="b" style="left:923.30px;top:528.20px;" width="10" height="10" viewBox="0 0 16 16" fill="none" stroke="#b3b3b3" stroke-width="1.6" stroke-linecap="round" stroke-linejoin="round"><path d="M11 1.500l-6.500 6.500 6.500 6.500"/></svg>
<div class="b" style="left:938.4px;top:523px;width:16.7px;height:20.5px;border:1px solid #f0f0f0;border-radius:2px;"></div>
<span class="t" style="left:944.41px;top:527px;font-size:8.6px;line-height:12px;color:#333;">1</span>
<span class="t" style="left:959.00px;top:527px;font-size:8.6px;line-height:12px;color:#777;letter-spacing:0.164px;">of</span>
<span class="t" style="left:970.70px;top:527px;font-size:8.6px;line-height:12px;color:#333;">1</span>
<svg class="b" style="left:979.30px;top:528.20px;" width="10" height="10" viewBox="0 0 16 16" fill="none" stroke="#b3b3b3" stroke-width="1.6" stroke-linecap="round" stroke-linejoin="round"><path d="M5 1.500l6.500 6.500-6.500 6.500"/></svg>
</body></html>
